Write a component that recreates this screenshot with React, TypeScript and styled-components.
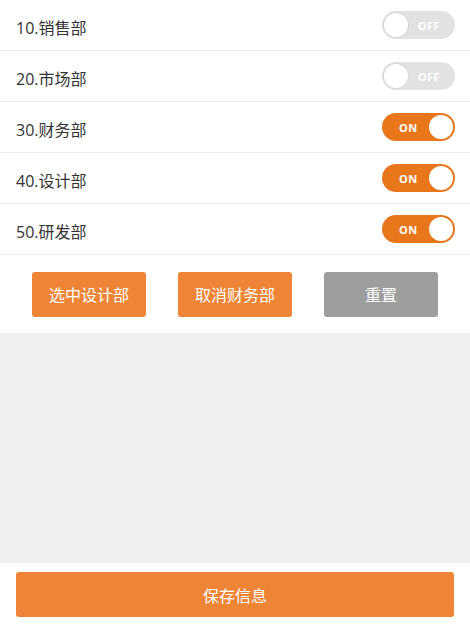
import React, { useState } from 'react';
import styled, { createGlobalStyle } from 'styled-components';

const GlobalStyle = createGlobalStyle`
  html, body {
    margin: 0;
    padding: 0;
    background: #f0f0f0;
    font-family: "Open Sans", "Noto Sans CJK SC", sans-serif;
  }
`;

const Page = styled.div`
  width: 470px;
  height: 625px;
  display: flex;
  flex-direction: column;
  background: #f0f0f0;
`;

const List = styled.div`
  background: #fff;
`;

const Row = styled.div`
  height: 50px;
  display: flex;
  align-items: center;
  justify-content: space-between;
  padding: 0 15px 0 16px;
  border-bottom: 1px solid #ececec;
`;

const Label = styled.span`
  font-size: 16px;
  color: #333;
  margin-top: 3px;
`;

const Switch = styled.button<{ $on: boolean }>`
  position: relative;
  width: 73px;
  height: 28px;
  border: none;
  border-radius: 14px;
  padding: 0;
  cursor: pointer;
  background: ${(p) => (p.$on ? '#e8771c' : '#e2e2e2')};
  display: flex;
  align-items: center;
  justify-content: ${(p) => (p.$on ? 'flex-start' : 'flex-end')};
`;

const SwitchText = styled.span<{ $on: boolean }>`
  font-family: "Open Sans", sans-serif;
  font-size: 11px;
  font-weight: 700;
  color: #fff;
  letter-spacing: 0.5px;
  ${(p) => (p.$on ? 'margin-left: 17px;' : 'margin-right: 15px;')}
`;

const Knob = styled.span<{ $on: boolean }>`
  position: absolute;
  top: 2px;
  ${(p) => (p.$on ? 'right: 2px;' : 'left: 2px;')}
  width: 24px;
  height: 24px;
  border-radius: 50%;
  background: #fff;
  box-shadow: 0 0 0 1px ${(p) => (p.$on ? '#e8771c' : '#d6d6d6')};
`;

const ActionBar = styled.div`
  background: #fff;
  height: 78px;
  display: flex;
  align-items: center;
  justify-content: center;
  gap: 32px;
`;

const ActionButton = styled.button<{ $muted?: boolean }>`
  width: 114px;
  height: 45px;
  border: none;
  border-radius: 3px;
  background: ${(p) => (p.$muted ? '#9e9e9e' : '#ee8536')};
  color: #fff;
  font-family: "Noto Sans CJK SC", sans-serif;
  font-size: 16px;
  cursor: pointer;
`;

const Spacer = styled.div`
  flex: 1;
`;

const Footer = styled.div`
  background: #fff;
  height: 62px;
  padding: 9px 16px 0;
  box-sizing: border-box;
`;

const SaveButton = styled.button`
  width: 100%;
  height: 45px;
  border: none;
  border-radius: 3px;
  background: #ee8536;
  color: #fff;
  font-family: "Noto Sans CJK SC", sans-serif;
  font-size: 16px;
  cursor: pointer;
`;

const departments = [
  { id: 10, name: '销售部' },
  { id: 20, name: '市场部' },
  { id: 30, name: '财务部' },
  { id: 40, name: '设计部' },
  { id: 50, name: '研发部' },
];

const initial: Record<number, boolean> = { 10: false, 20: false, 30: true, 40: true, 50: true };

export default function App() {
  const [state, setState] = useState(initial);

  const toggle = (id: number) => setState((s) => ({ ...s, [id]: !s[id] }));

  return (
    <>
      <GlobalStyle />
      <Page>
        <List>
          {departments.map((d) => (
            <Row key={d.id}>
              <Label>
                {d.id}.{d.name}
              </Label>
              <Switch $on={state[d.id]} onClick={() => toggle(d.id)}>
                <SwitchText $on={state[d.id]}>{state[d.id] ? 'ON' : 'OFF'}</SwitchText>
                <Knob $on={state[d.id]} />
              </Switch>
            </Row>
          ))}
        </List>
        <ActionBar>
          <ActionButton onClick={() => setState((s) => ({ ...s, 40: true }))}>选中设计部</ActionButton>
          <ActionButton onClick={() => setState((s) => ({ ...s, 30: false }))}>取消财务部</ActionButton>
          <ActionButton $muted onClick={() => setState(initial)}>
            重置
          </ActionButton>
        </ActionBar>
        <Spacer />
        <Footer>
          <SaveButton>保存信息</SaveButton>
        </Footer>
      </Page>
    </>
  );
}
